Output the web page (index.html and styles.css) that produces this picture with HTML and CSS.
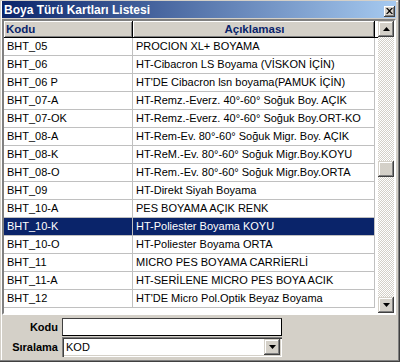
FILE: index.html
```html
<!DOCTYPE html>
<html lang="tr">
<head>
    <meta charset="UTF-8">
    <title>Boya Türü Kartları Listesi</title>
    <link rel="stylesheet" href="styles.css">
</head>
<body>
    <div class="window">
        <!-- Başlık çubuğu -->
        <div class="titlebar">
            <span class="title">Boya Türü Kartları Listesi</span>
            <div class="close-btn">
                <svg width="7" height="6" viewBox="0 0 7 6"><path d="M0 0h1.5l2 2 2-2H7L4.3 3 7 6H5.5l-2-2-2 2H0l2.7-3z" fill="#000"/></svg>
            </div>
        </div>

        <!-- Liste -->
        <div class="grid">
            <div class="grid-data">
                <div class="grid-head">
                    <div class="hcell c1">Kodu</div>
                    <div class="hcell c2 center">Açıklaması</div>
                </div>
                <div class="row"><div class="cell c1">BHT_05</div><div class="cell c2">PROCION XL+ BOYAMA</div></div>
                <div class="row"><div class="cell c1">BHT_06</div><div class="cell c2">HT-Cibacron LS Boyama (VİSKON İÇİN)</div></div>
                <div class="row"><div class="cell c1">BHT_06 P</div><div class="cell c2">HT'DE Cibacron lsn boyama(PAMUK İÇİN)</div></div>
                <div class="row"><div class="cell c1">BHT_07-A</div><div class="cell c2">HT-Remz.-Everz. 40°-60° Soğuk Boy. AÇIK</div></div>
                <div class="row"><div class="cell c1">BHT_07-OK</div><div class="cell c2">HT-Remz.-Everz. 40°-60° Soğuk Boy.ORT-KO</div></div>
                <div class="row"><div class="cell c1">BHT_08-A</div><div class="cell c2">HT-Rem-Ev. 80°-60° Soğuk Migr. Boy. AÇIK</div></div>
                <div class="row"><div class="cell c1">BHT_08-K</div><div class="cell c2">HT-ReM.-Ev. 80°-60° Soğuk Migr.Boy.KOYU</div></div>
                <div class="row"><div class="cell c1">BHT_08-O</div><div class="cell c2">HT-Rem.-Ev. 80°-60° Soğuk Migr.Boy.ORTA</div></div>
                <div class="row"><div class="cell c1">BHT_09</div><div class="cell c2">HT-Direkt Siyah Boyama</div></div>
                <div class="row"><div class="cell c1">BHT_10-A</div><div class="cell c2">PES BOYAMA AÇIK RENK</div></div>
                <div class="row selected"><div class="cell c1">BHT_10-K</div><div class="cell c2">HT-Poliester Boyama KOYU</div></div>
                <div class="row"><div class="cell c1">BHT_10-O</div><div class="cell c2">HT-Poliester Boyama ORTA</div></div>
                <div class="row"><div class="cell c1">BHT_11</div><div class="cell c2">MICRO PES BOYAMA CARRİERLİ</div></div>
                <div class="row"><div class="cell c1">BHT_11-A</div><div class="cell c2">HT-SERİLENE MICRO PES BOYA ACIK</div></div>
                <div class="row"><div class="cell c1">BHT_12</div><div class="cell c2">HT'DE Micro Pol.Optik Beyaz Boyama</div></div>
            </div>

            <!-- Kaydırma çubuğu -->
            <div class="vscroll">
                <div class="sbtn"><svg width="7" height="4" viewBox="0 0 7 4"><path d="M3.5 0L7 4H0z" fill="#000"/></svg></div>
                <div class="track">
                    <div class="thumb"></div>
                </div>
                <div class="sbtn"><svg width="7" height="4" viewBox="0 0 7 4"><path d="M0 0h7L3.5 4z" fill="#000"/></svg></div>
            </div>
        </div>

        <!-- Arama alanları -->
        <div class="filters">
            <label class="flabel">Kodu</label>
            <input class="field" type="text">
            <label class="flabel">Sıralama</label>
            <div class="combo">
                <span class="combo-text">KOD</span>
                <div class="sbtn combo-btn"><svg width="7" height="4" viewBox="0 0 7 4"><path d="M0 0h7L3.5 4z" fill="#000"/></svg></div>
            </div>
        </div>
    </div>
</body>
</html>
```

FILE: styles.css
```css
body {
    margin: 0;
    padding: 0;
    font-family: "Liberation Sans", Arial, sans-serif;
    font-size: 11px;
    background-color: #d4d0c8;
}

/* Pencere çerçevesi */
.window {
    width: 400px;
    height: 362px;
    box-sizing: border-box;
    padding: 1px 4px 0 2px;
    background-color: #d4d0c8;
    box-shadow: inset -1px -1px #404040, inset -2px -2px #808080, inset 1px 1px #d4d0c8, inset 2px 2px #ffffff;
}

.titlebar {
    height: 17px;
    display: flex;
    align-items: center;
    justify-content: space-between;
    padding-left: 2px;
    background: linear-gradient(to right, #0a246a, #a6caf0);
}

.title {
    color: #ffffff;
    font-weight: bold;
    font-size: 12px;
}

.close-btn {
    width: 11px;
    height: 11px;
    box-sizing: border-box;
    margin: 3px 1px 0 0;
    display: flex;
    align-items: center;
    justify-content: center;
    background-color: #d4d0c8;
    box-shadow: inset -1px -1px #404040, inset 1px 1px #ffffff, inset -2px -2px #808080;
}

/* Liste */
.grid {
    margin-top: 1px;
    height: 296px;
    box-sizing: border-box;
    display: flex;
    border: 2px solid;
    border-color: #808080 #ffffff #ffffff #808080;
    box-shadow: inset 1px 1px #404040;
}

.grid-data {
    flex: 1;
    background-color: #ffffff;
}

.grid-head {
    display: flex;
    height: 17px;
    box-sizing: border-box;
    border-bottom: 1px solid #000000;
}

.hcell {
    box-sizing: border-box;
    height: 16px;
    line-height: 16px;
    padding-left: 2px;
    font-weight: bold;
    font-size: 11.5px;
    color: #0a246a;
    background-color: #d4d0c8;
    border-right: 1px solid #000000;
    box-shadow: inset 1px 1px #ffffff, inset -1px -1px #808080;
}

.hcell.c1 {
    width: 129px;
}

.hcell.c2 {
    width: 242px;
}

.center {
    text-align: center;
}

.row {
    display: flex;
    height: 18px;
    box-sizing: border-box;
}

.cell {
    box-sizing: border-box;
    height: 18px;
    line-height: 17px;
    padding-left: 3px;
    border-right: 1px solid #c0c0c0;
    border-bottom: 1px solid #c0c0c0;
    white-space: nowrap;
    overflow: hidden;
    color: #000000;
}

.cell.c1 {
    width: 129px;
}

.cell.c2 {
    width: 242px;
}

.row.selected .cell {
    background-color: #0a246a;
    color: #ffffff;
}

/* Kaydırma çubuğu */
.vscroll {
    width: 16px;
    display: flex;
    flex-direction: column;
}

.sbtn {
    width: 16px;
    height: 16px;
    flex: none;
    box-sizing: border-box;
    display: flex;
    align-items: center;
    justify-content: center;
    background-color: #d4d0c8;
    box-shadow: inset -1px -1px #404040, inset 1px 1px #d4d0c8, inset -2px -2px #808080, inset 2px 2px #ffffff;
}

.track {
    flex: 1;
    padding-top: 124px;
    background: repeating-conic-gradient(#ffffff 0 25%, #d4d0c8 0 50%) 0 0 / 2px 2px;
}

.thumb {
    width: 16px;
    height: 16px;
    background-color: #d4d0c8;
    box-shadow: inset -1px -1px #404040, inset 1px 1px #d4d0c8, inset -2px -2px #808080, inset 2px 2px #ffffff;
}

/* Arama alanları */
.filters {
    display: grid;
    grid-template-columns: 56px 220px;
    grid-template-rows: 18px 20px;
    column-gap: 4px;
    row-gap: 1px;
    margin-top: 3px;
    align-items: center;
}

.flabel {
    text-align: right;
    font-weight: bold;
    color: #000000;
}

.field {
    width: 220px;
    height: 18px;
    box-sizing: border-box;
    margin: 0;
    padding: 0 2px;
    font-family: inherit;
    font-size: 11px;
    background-color: #ffffff;
    border: 1px solid;
    border-color: #404040 #000000 #000000 #404040;
    outline: none;
}

.combo {
    width: 220px;
    height: 20px;
    box-sizing: border-box;
    display: flex;
    align-items: center;
    justify-content: space-between;
    padding: 2px;
    background-color: #ffffff;
    box-shadow: inset 1px 1px #808080, inset 2px 2px #404040, inset -1px -1px #ffffff, inset -2px -2px #d4d0c8;
}

.combo-text {
    padding-left: 2px;
}
```
